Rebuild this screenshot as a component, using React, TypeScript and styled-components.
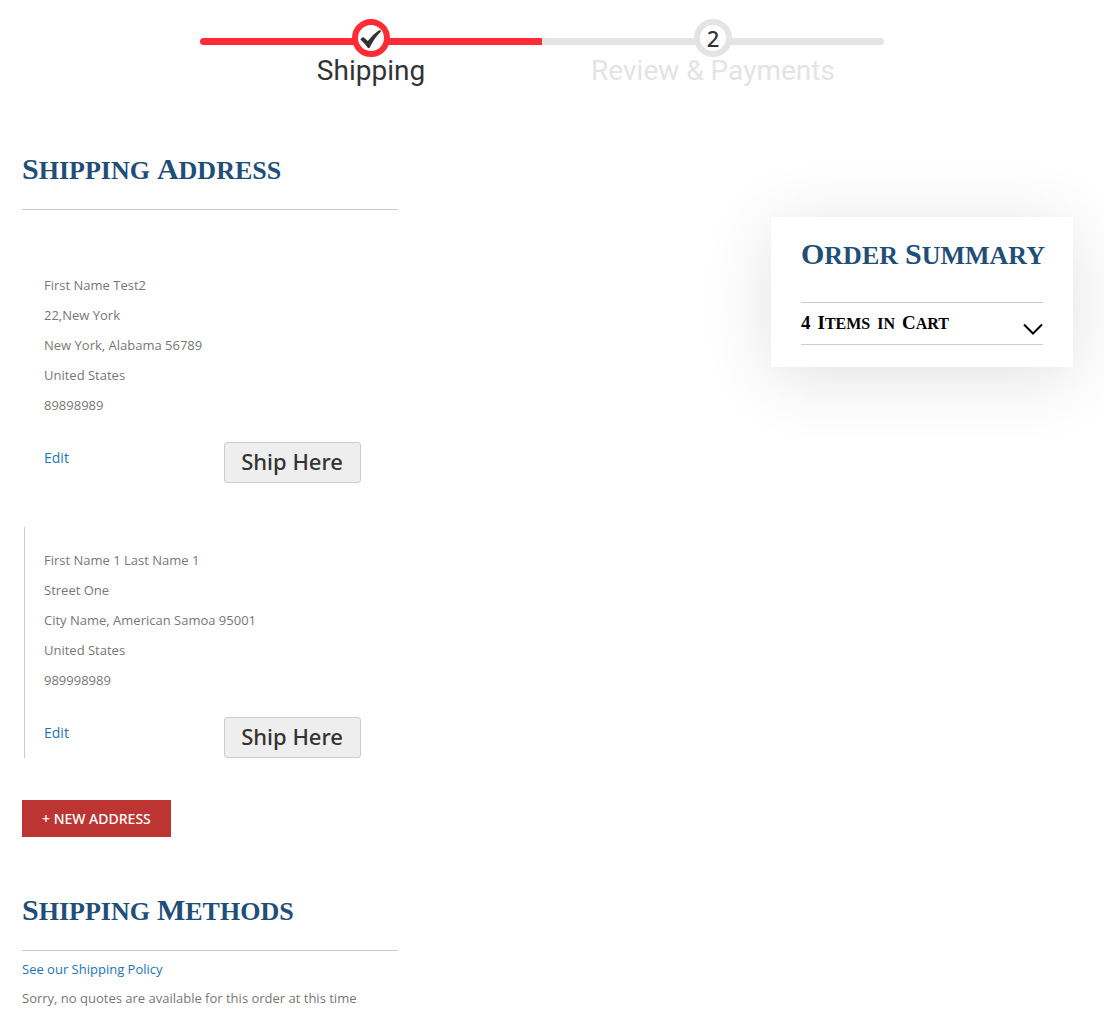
import React from "react";
import styled, { createGlobalStyle } from "styled-components";

const sans = `"Open Sans", "Noto Sans", sans-serif`;
const wideSans = `"Noto Sans", "Open Sans", sans-serif`;
const serif = `"Liberation Serif", "Times New Roman", serif`;

const GlobalStyle = createGlobalStyle`
  *, *::before, *::after { box-sizing: border-box; }
  body {
    margin: 0;
    background: #fff;
    color: #777;
    font: 400 13px/30px ${sans};
  }
`;

const Page = styled.div`
  padding: 19px 31px 20px 22px;
`;

const Progress = styled.ol`
  display: flex;
  justify-content: center;
  list-style: none;
  margin: 0 11px 0 0;
  padding: 0;
`;

const Step = styled.li<{ $done?: boolean }>`
  position: relative;
  flex: 0 1 342px;
  display: flex;
  flex-direction: column;
  align-items: center;
  color: ${(p) => (p.$done ? "#333" : "#e4e4e4")};
  font-family: Roboto, sans-serif;
  font-size: 28px;
  line-height: 27px;

  &::before {
    content: "";
    position: absolute;
    top: 19px;
    left: 0;
    right: 0;
    height: 7px;
    background: ${(p) => (p.$done ? "#ff2c35" : "#e4e4e4")};
  }
  &:first-child::before { border-radius: 6px 0 0 6px; }
  &:last-child::before { border-radius: 0 6px 6px 0; }
`;

const Marker = styled.span<{ $done?: boolean }>`
  position: relative;
  display: grid;
  place-items: center;
  width: 38px;
  height: 38px;
  border: 6px solid ${(p) => (p.$done ? "#ff2c35" : "#e4e4e4")};
  border-radius: 50%;
  background: #fff;
  color: #333;
  font-family: ${wideSans};
  font-size: 22px;
  font-weight: 500;
  line-height: 24px;
`;

const Columns = styled.div`
  display: flex;
  justify-content: space-between;
  align-items: flex-start;
  gap: 32px;
  margin-top: 68px;
`;

const Main = styled.main`
  flex: 0 1 376px;
`;

const Section = styled.section`
  & + & { margin-top: 56px; }
`;

const Title = styled.h2<{ $small?: boolean }>`
  display: flex;
  gap: ${(p) => (p.$small ? 7 : 7)}px;
  margin: 0;
  color: ${(p) => (p.$small ? "#000" : "#1f4e79")};
  font-family: ${serif};
  font-size: ${(p) => (p.$small ? 23 : 37)}px;
  font-weight: 700;
  font-variant: small-caps;
  line-height: ${(p) => (p.$small ? 20 : 30)}px;
  white-space: nowrap;
`;

const Word = styled.span<{ $small?: boolean; $plain?: boolean }>`
  display: block;
  height: ${(p) => (p.$small ? 20 : 32)}px;
  &::first-letter {
    font-variant: ${(p) => (p.$plain ? "small-caps" : "normal")};
    font-size: ${(p) => (p.$plain ? 23 : p.$small ? 19 : 30)}px;
  }
`;

const SectionHead = styled.header`
  padding-bottom: 25px;
  border-bottom: 1px solid #ccc;
`;

const Addresses = styled.div`
  display: grid;
  gap: 44px;
  margin: 42px 0;
`;

const AddressItem = styled.article<{ $ruled?: boolean }>`
  margin-left: 2px;
  padding: 18px 37px 0 19px;
  border-left: 1px solid ${(p) => (p.$ruled ? "#ccc" : "transparent")};
`;

const AddressLines = styled.address`
  display: grid;
  font-style: normal;
`;

const Actions = styled.div`
  display: flex;
  justify-content: space-between;
  align-items: flex-start;
  margin-top: 22px;
`;

const Link = styled.a`
  color: #1b75bb;
  text-decoration: none;
`;

const EditLink = styled(Link)`
  font-size: 14px;
  line-height: 32px;
`;

const ShipButton = styled.button`
  height: 41px;
  padding: 0 17px 3px 16px;
  border: 1px solid #ccc;
  border-radius: 3px;
  background: #eee;
  color: #333;
  font: 500 22px/36px ${wideSans};
`;

const NewAddressButton = styled.button`
  display: block;
  height: 37px;
  padding: 0 20px;
  border: 0;
  background: #bd3533;
  color: #fff;
  font: 500 14px/37px ${wideSans};
  white-space: nowrap;
`;

const MethodText = styled.p`
  margin: 0;
  line-height: 29px;
`;

const MethodBody = styled.div`
  padding-top: 4px;
`;

const Summary = styled.aside`
  flex: 0 0 302px;
  min-width: 0;
  margin-top: 65px;
  padding: 20px 30px 22px;
  background: #fff;
  box-shadow: 0 10px 70px rgba(0, 0, 0, 0.12);
`;

const CartToggle = styled.button`
  display: flex;
  justify-content: space-between;
  align-items: flex-start;
  width: 100%;
  height: 43px;
  margin-top: 33px;
  padding: 9px 0 0;
  border: solid #ccc;
  border-width: 1px 0;
  background: none;
  text-align: left;
`;

const Chevron = styled.svg`
  width: 20px;
  height: 12px;
  margin-top: 11px;
`;

function Heading({ text, small, as }: { text: string; small?: boolean; as?: "h2" | "span" }) {
  return (
    <Title as={as} $small={small}>
      {text.split(" ").map((word, i) => (
        <Word key={i} $small={small} $plain={/^[a-z]/.test(word)}>
          {word}
        </Word>
      ))}
    </Title>
  );
}

const addresses = [
  ["First Name Test2", "22,New York", "New York, Alabama 56789", "United States", "89898989"],
  ["First Name 1 Last Name 1", "Street One", "City Name, American Samoa 95001", "United States", "989998989"],
];

export default function App() {
  return (
    <Page>
      <GlobalStyle />
      <Progress>
        <Step $done>
          <Marker $done>
            <svg width="22" height="22" viewBox="0 0 22 22" aria-hidden="true">
              <path
                d="M0.4 12.4 Q1.8 10 3.6 10.2 L7.8 14 Q12.5 7.5 19 3.2 Q21.3 3 21 4.6 Q14.5 10.8 9.8 20.6 Q8.6 21.8 7.6 20.6 Q4.6 16 0.4 12.4 Z"
                fill="#333"
              />
            </svg>
          </Marker>
          Shipping
        </Step>
        <Step>
          <Marker>2</Marker>
          Review &amp; Payments
        </Step>
      </Progress>

      <Columns>
        <Main>
          <Section>
            <SectionHead>
              <Heading text="Shipping Address" />
            </SectionHead>
            <Addresses>
              {addresses.map((lines, i) => (
                <AddressItem key={i} $ruled={i > 0}>
                  <AddressLines>
                    {lines.map((line) => (
                      <span key={line}>{line}</span>
                    ))}
                  </AddressLines>
                  <Actions>
                    <EditLink href="#edit">Edit</EditLink>
                    <ShipButton type="button">Ship Here</ShipButton>
                  </Actions>
                </AddressItem>
              ))}
            </Addresses>
            <NewAddressButton type="button">+ NEW ADDRESS</NewAddressButton>
          </Section>

          <Section>
            <SectionHead>
              <Heading text="Shipping Methods" />
            </SectionHead>
            <MethodBody>
              <MethodText>
                <Link href="#policy">See our Shipping Policy</Link>
              </MethodText>
              <MethodText>Sorry, no quotes are available for this order at this time</MethodText>
            </MethodBody>
          </Section>
        </Main>

        <Summary>
          <Heading text="Order Summary" />
          <CartToggle type="button" aria-expanded="false">
            <Heading as="span" small text="4 Items in Cart" />
            <Chevron viewBox="0 0 20 12" aria-hidden="true">
              <path d="M1 1.5 L10 10.5 L19 1.5" fill="none" stroke="#000" strokeWidth="2" />
            </Chevron>
          </CartToggle>
        </Summary>
      </Columns>
    </Page>
  );
}
